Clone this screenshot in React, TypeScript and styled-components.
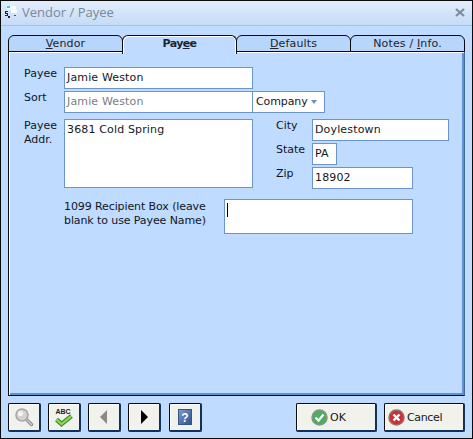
import React from "react";
import styled, { createGlobalStyle } from "styled-components";

const Global = createGlobalStyle`
  html, body { margin: 0; padding: 0; background: #bfdbff; }
  * { box-sizing: border-box; }
`;

const Win = styled.div`
  width: 473px;
  height: 439px;
  display: flex;
  flex-direction: column;
  background: #bfdbff;
  border: 1px solid #0a0a0a;
  font-family: "DejaVu Sans", sans-serif;
  font-size: 11px;
  color: #10161e;
  overflow: hidden;
`;
const TitleBar = styled.div`
  height: 25px;
  flex: none;
  display: flex;
  align-items: center;
  padding: 0 7px 2px 4px;
  gap: 4px;
  background: linear-gradient(#e3eefb, #d3e4f9 50%, #c6dbf6);
  border-bottom: 1px solid #9ec3ea;
`;
const TitleText = styled.div`
  flex: 1;
  font-family: "Open Sans", "DejaVu Sans", sans-serif;
  font-size: 13px;
  color: #7b8799;
`;
const Content = styled.div`
  flex: 1;
  display: flex;
  flex-direction: column;
  padding: 9px 5px 6px 7px;
`;
const TabRow = styled.div`
  display: flex;
  height: 16px;
  flex: none;
`;
const Tab = styled.div<{ $active?: boolean }>`
  width: 115px;
  height: ${(p) => (p.$active ? "19px" : "17px")};
  z-index: ${(p) => (p.$active ? 2 : 1)};
  text-align: center;
  line-height: 15px;
  position: relative;
  font-weight: ${(p) => (p.$active ? 700 : 400)};
  letter-spacing: ${(p) => (p.$active ? "-0.6px" : "0.15px")};
  background: ${(p) => (p.$active ? "#bfdbff" : "#b8d5fb")};
  border: 1px solid #0a0a0a;
  border-bottom: ${(p) => (p.$active ? "none" : "1px solid #0a0a0a")};
  border-top-left-radius: 6px;
  border-top-right-radius: 6px;
  box-shadow: ${(p) => (p.$active ? "inset 1px 1px 0 #fff, inset -1px 0 0 #fff" : "none")};
  color: #1c2530;
  & + & { margin-left: -1px; }
`;
const Panel = styled.div`
  height: 345px;
  flex: none;
  width: 457px;
  border: 1px solid #0a0a0a;
  border-right-color: #3f6ba6;
  box-shadow: inset 1px 1px 0 #fff, inset -2px -2px 0 #5f93d6;
  padding: 15px 0 0 15px;
  background: #bfdbff;
  display: flex;
  flex-direction: column;
`;
const Row = styled.div`
  display: flex;
  align-items: flex-start;
  margin-bottom: 2px;
`;
const Label = styled.label`
  width: 40px;
  flex: none;
  line-height: 14px;
`;
const Box = styled.div<{ $w: number; $h?: number; $muted?: boolean }>`
  width: ${(p) => p.$w}px;
  height: ${(p) => p.$h ?? 22}px;
  flex: none;
  background: #fff;
  border: 1px solid #6a94d0;
  padding: 3px 2px;
  line-height: 14px;
  letter-spacing: 0.15px;
  color: ${(p) => (p.$muted ? "#7c7c84" : "#14181e")};
  white-space: nowrap;
  overflow: hidden;
`;
const ComboBox = styled(Box)`
  margin-left: -1px;
  display: flex;
  justify-content: space-between;
  align-items: center;
  padding: 0 7px 0 3px;
  letter-spacing: -0.1px;
`;
const Caret = styled.span`
  width: 0;
  height: 0;
  border-left: 3px solid transparent;
  border-right: 3px solid transparent;
  border-top: 4px solid #6f8fbe;
`;
const AddrRow = styled.div`
  display: flex;
  margin-top: 4px;
  align-items: flex-start;
`;
const CityCol = styled.div`
  display: grid;
  grid-template-columns: 36px auto;
  row-gap: 2px;
  margin-left: 23px;
  justify-items: start;
`;
const CityLabel = styled.label`
  line-height: 14px;
`;
const RecipientRow = styled.div`
  display: flex;
  margin-top: 10px;
  margin-left: 40px;
  align-items: flex-start;
`;
const RecipientText = styled.div`
  width: 160px;
  line-height: 14px;
  padding-top: 1px;
  letter-spacing: -0.1px;
`;
const Cursor = styled.div`
  width: 1px;
  height: 14px;
  background: #000;
`;
const Footer = styled.div`
  display: flex;
  margin-top: 7px;
  height: 29px;
`;
const Btn = styled.button<{ $w: number; $ml?: number; $pl?: number }>`
  width: ${(p) => p.$w}px;
  height: 29px;
  margin-left: ${(p) => p.$ml ?? 0}px;
  padding: 0 0 0 ${(p) => p.$pl ?? 0}px;
  background: #f1f2ec;
  border: 1px solid #0a0a0a;
  border-bottom: 2px solid #12305c;
  border-right: 2px solid #12305c;
  border-radius: 2px;
  box-shadow: inset 1px 1px 0 #fff;
  display: flex;
  align-items: center;
  justify-content: ${(p) => (p.$pl !== undefined ? "flex-start" : "center")};
  gap: 2px;
  font-family: inherit;
  font-size: 11px;
  color: #14181e;
`;
const BtnLabel = styled.span<{ $tight?: boolean }>`
  letter-spacing: ${(p) => (p.$tight ? "-0.35px" : "0")};
`;
const U = styled.span`
  text-decoration: underline;
`;

const AppIcon = () => (
  <svg width="13" height="13" viewBox="0 0 13 13">
    <rect x="2" y="0" width="9" height="4" fill="#f4fbff" />
    <rect x="2" y="0" width="3" height="2" fill="#35d4e0" />
    <rect x="6" y="4" width="6" height="3" fill="#fff" />
    <path d="M0 5h3v1H1v1h2v3H0V9h2V8H0z" fill="#222" />
    <rect x="3" y="10" width="2" height="2" fill="#222" />
    <rect x="9" y="9" width="2" height="1" fill="#555" />
  </svg>
);
const CloseIcon = () => (
  <svg width="10" height="9" viewBox="0 0 10 9">
    <path d="M1 1l8 7M9 1L1 8" stroke="#7e8a98" strokeWidth="2.2" />
  </svg>
);
const SearchIcon = () => (
  <svg width="20" height="20" viewBox="0 0 20 20">
    <path d="M11 11l6.5 6.5" stroke="#8c8c8c" strokeWidth="3.4" strokeLinecap="round" />
    <path d="M11 11l6.5 6.5" stroke="#d4d4d4" strokeWidth="1.2" strokeLinecap="round" />
    <circle cx="8" cy="8" r="6" fill="#d2d2d2" stroke="#a6a6a6" strokeWidth="1.6" />
    <circle cx="6.5" cy="6.5" r="2.6" fill="#f4f4f4" />
  </svg>
);
const SpellIcon = () => (
  <svg width="20" height="20" viewBox="0 0 20 20">
    <text x="1.5" y="6.5" fontFamily="Liberation Sans" fontWeight="700" fontSize="7" fill="#222">ABC</text>
    <path d="M2.5 12.5l5 4.5L17.5 9" stroke="#3f8a2a" strokeWidth="4.4" fill="none" />
    <path d="M2.5 12.5l5 4.5L17.5 9" stroke="#92d65c" strokeWidth="2.2" fill="none" />
  </svg>
);
const Arrow = ({ dir, color }: { dir: "l" | "r"; color: string }) => (
  <svg width="8" height="14" viewBox="0 0 8 14">
    <path d={dir === "l" ? "M7 0v14L0 7z" : "M1 0v14l7-7z"} fill={color} />
  </svg>
);
const HelpIcon = () => (
  <svg width="14" height="16" viewBox="0 0 14 16">
    <defs>
      <linearGradient id="hb" x1="0" y1="0" x2="1" y2="1">
        <stop offset="0" stopColor="#7f9ccc" />
        <stop offset="1" stopColor="#2c4f90" />
      </linearGradient>
    </defs>
    <rect x="0.5" y="0.5" width="13" height="15" fill="url(#hb)" stroke="#33558f" />
    <text x="7" y="12.5" textAnchor="middle" fontFamily="Liberation Sans" fontWeight="700" fontSize="12" fill="#fff">?</text>
  </svg>
);
const OkIcon = () => (
  <svg width="17" height="17" viewBox="0 0 17 17">
    <circle cx="8.5" cy="8.5" r="7.5" fill="#4cae5e" stroke="#86948a" strokeWidth="1.5" />
    <path d="M4.5 8.5l3 3 5-6" stroke="#fff" strokeWidth="2.2" fill="none" />
  </svg>
);
const CancelIcon = () => (
  <svg width="17" height="17" viewBox="0 0 17 17">
    <circle cx="8.5" cy="8.5" r="7.5" fill="#cc2f35" stroke="#96706c" strokeWidth="1.5" />
    <path d="M5.5 5.5l6 6M11.5 5.5l-6 6" stroke="#fff" strokeWidth="2.4" />
  </svg>
);

export default function App() {
  return (
    <Win>
      <Global />
      <TitleBar>
        <AppIcon />
        <TitleText>Vendor / Payee</TitleText>
        <CloseIcon />
      </TitleBar>
      <Content>
        <TabRow>
          <Tab><U>V</U>endor</Tab>
          <Tab $active>Pay<U>e</U>e</Tab>
          <Tab><U>D</U>efaults</Tab>
          <Tab>Notes / <U>I</U>nfo.</Tab>
        </TabRow>
        <Panel>
          <Row>
            <Label>Payee</Label>
            <Box $w={189}>Jamie Weston</Box>
          </Row>
          <Row>
            <Label>Sort</Label>
            <Box $w={189} $muted>Jamie Weston</Box>
            <ComboBox $w={73}>Company<Caret /></ComboBox>
          </Row>
          <AddrRow>
            <Label>Payee Addr.</Label>
            <Box $w={189} $h={69}>3681 Cold Spring</Box>
            <CityCol>
              <CityLabel>City</CityLabel>
              <Box $w={137}>Doylestown</Box>
              <CityLabel>State</CityLabel>
              <Box $w={25}>PA</Box>
              <CityLabel>Zip</CityLabel>
              <Box $w={101}>18902</Box>
            </CityCol>
          </AddrRow>
          <RecipientRow>
            <RecipientText>1099 Recipient Box (leave blank to use Payee Name)</RecipientText>
            <Box $w={189} $h={35}><Cursor /></Box>
          </RecipientRow>
        </Panel>
        <Footer>
          <Btn $w={33}><SearchIcon /></Btn>
          <Btn $w={33} $ml={7}><SpellIcon /></Btn>
          <Btn $w={33} $ml={7}><Arrow dir="l" color="#8a8a8a" /></Btn>
          <Btn $w={33} $ml={7}><Arrow dir="r" color="#000" /></Btn>
          <Btn $w={33} $ml={8}><HelpIcon /></Btn>
          <Btn $w={81} $ml={94} $pl={14}><OkIcon /><BtnLabel>OK</BtnLabel></Btn>
          <Btn $w={81} $ml={7} $pl={3}><CancelIcon /><BtnLabel $tight>Cancel</BtnLabel></Btn>
        </Footer>
      </Content>
    </Win>
  );
}
